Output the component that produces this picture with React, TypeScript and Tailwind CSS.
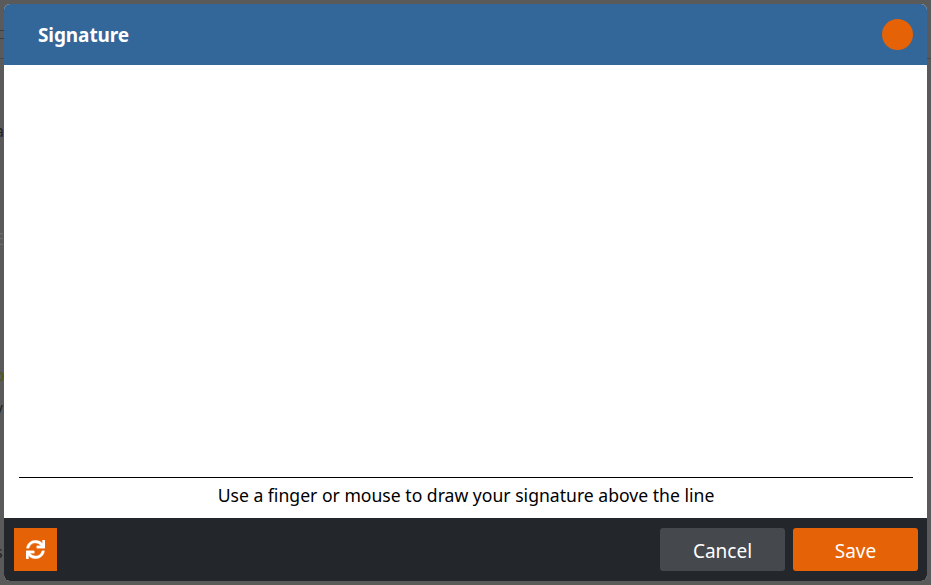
import { FaSync } from 'react-icons/fa';

const font = { fontFamily: '"Noto Sans", "Open Sans", sans-serif' };

export default function App() {
  return (
    <div className="relative w-[931px] h-[585px] bg-[#5a5a5a] p-1 overflow-hidden" style={font}>
      {/* page behind the overlay, only slivers of it show at the edges */}
      <div className="absolute left-0 top-[30px] w-1 h-px bg-[#3c3c3c]" />
      <div className="absolute left-0 top-[38px] w-1 h-px bg-[#3c3c3c]" />
      <div className="absolute left-0 top-[58px] w-1 h-px bg-[#484848]" />
      <div className="absolute right-0 top-[58px] w-1 h-px bg-[#484848]" />
      <span className="absolute left-[-5px] top-[121px] text-[#222222] text-base leading-5">a</span>
      <span className="absolute left-[-5px] top-[229px] text-[#6e6e6e] text-base leading-5">E</span>
      <span className="absolute left-[-5px] top-[365px] text-[#4a5a10] text-base leading-5">o</span>
      <span className="absolute left-[-3px] top-[401px] text-[#222222] text-base leading-5">/</span>
      <span className="absolute left-[-5px] top-[542px] text-[#222222] text-base leading-5">s</span>

      <div className="relative w-[923px] h-[577px] rounded-md overflow-hidden flex flex-col bg-white">
        <header className="h-[61px] bg-[#336699] flex items-center justify-between pl-[34px] pr-[14px]">
          <h1 className="text-white font-bold text-[19px] tracking-[-0.1px] leading-none mt-[1px]">Signature</h1>
          <button className="w-[31px] h-[31px] rounded-full bg-[#e66206] -mt-[1px]" />
        </header>

        <main className="flex-1 flex flex-col justify-end pl-[15px] pr-[14px]">
          <div className="border-t border-black h-[41px] pb-[4px] flex items-center justify-center text-black text-[17.6px] leading-none">
            Use a finger or mouse to draw your signature above the line
          </div>
        </main>

        <footer className="h-[63px] bg-[#23262b] flex items-center justify-between px-[10px] pb-[1px]">
          <button className="w-[43px] h-[43px] bg-[#e66206] text-white flex items-center justify-center">
            <FaSync className="w-[19px] h-[19px]" stroke="currentColor" strokeWidth={8} />
          </button>
          <div className="flex gap-2 mr-[-1px]">
            <button className="w-[125px] h-[43px] pt-1 rounded-[3px] bg-[#45484d] text-white text-[19px] leading-none">Cancel</button>
            <button className="w-[125px] h-[43px] pt-1 rounded-[3px] bg-[#e66206] text-white text-[19px] leading-none">Save</button>
          </div>
        </footer>
      </div>
    </div>
  );
}
